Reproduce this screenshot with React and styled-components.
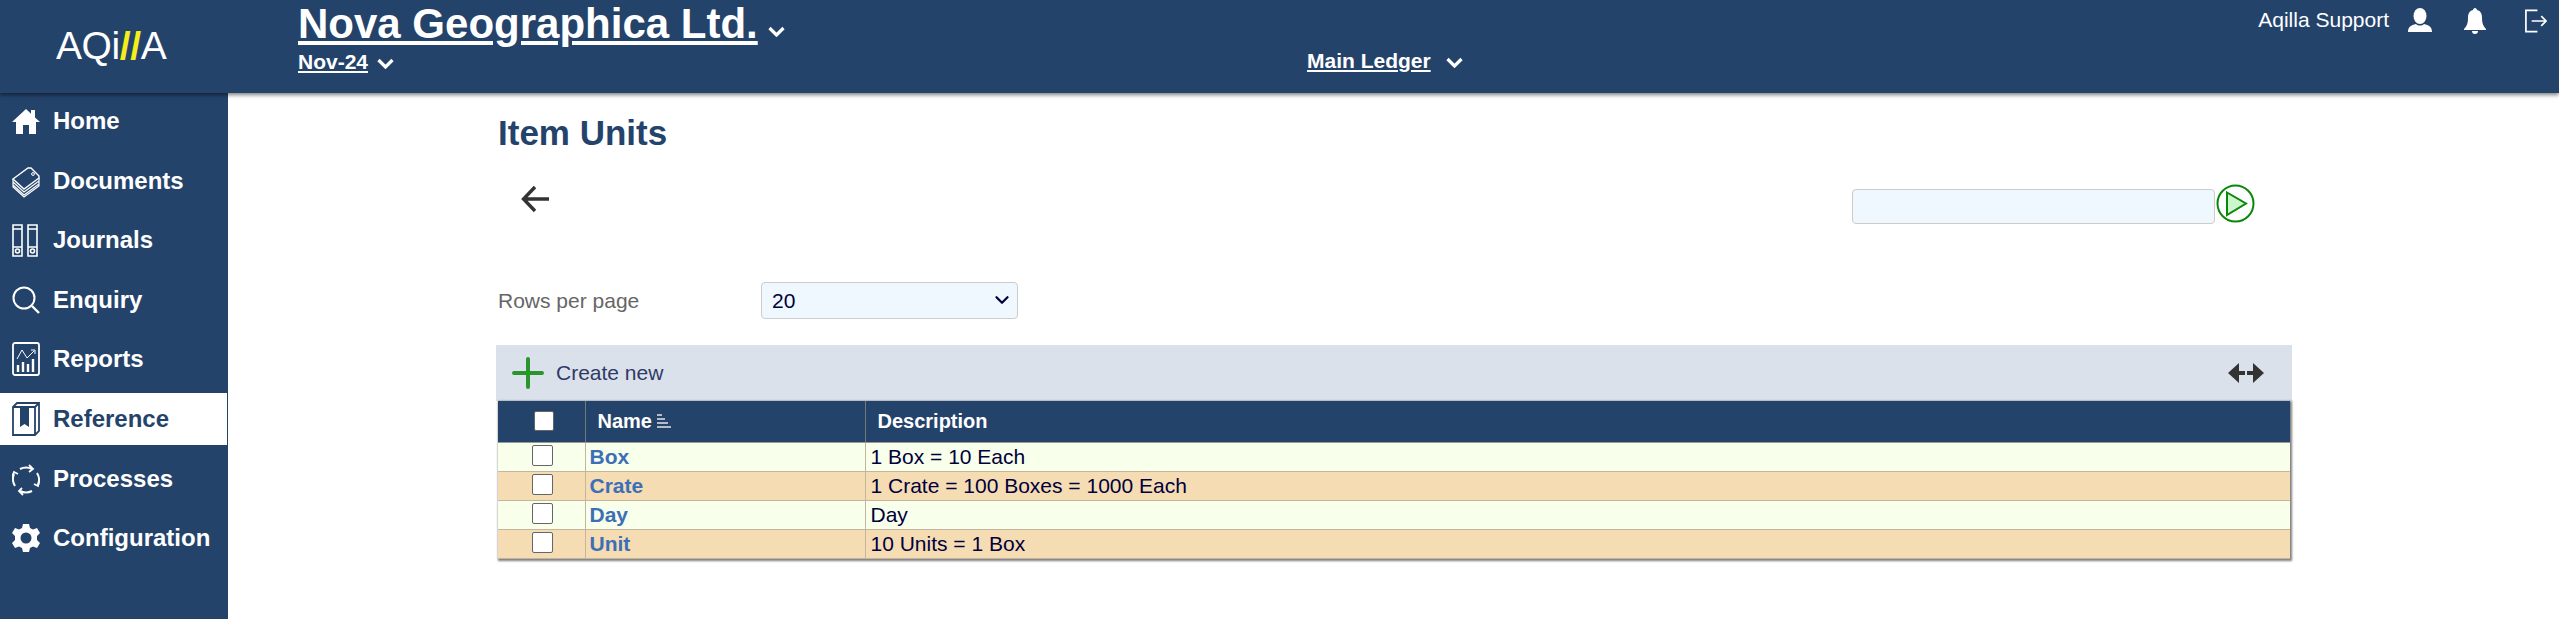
import styled, { createGlobalStyle } from "styled-components"
import { ChevronDown } from "lucide-react"

const navy = "#24436b"

const GlobalStyle = createGlobalStyle`
    html, body {
        margin: 0;
        padding: 0;
        background: white;
        font-family: "Liberation Sans", Arial, sans-serif;
    }
`

const Page = styled.div`
    width: 2559px;
    height: 619px;
    overflow: hidden;
    display: flex;
    flex-direction: column;
`

const Header = styled.header`
    height: 93px;
    flex: none;
    display: flex;
    background: ${navy};
    color: white;
    box-shadow: 0 2px 4px rgba(0, 0, 0, 0.5);
    position: relative;
    z-index: 1;
`

const LogoBox = styled.div`
    width: 228px;
    flex: none;
    padding: 24px 0 0 56px;
    box-sizing: border-box;
    font-size: 39px;
    line-height: 44px;
    letter-spacing: -0.4px;
`

const Slash = styled.span`
    color: #f4ee1a;
    font-weight: 700;
`

const Company = styled.div`
    width: 1070px;
    flex: none;
    padding-left: 70px;
    box-sizing: border-box;
`

const CompanyLine = styled.div`
    display: flex;
    align-items: center;
    height: 48px;
`

const CompanyName = styled.span`
    font-size: 42px;
    line-height: 48px;
    font-weight: 700;
    text-decoration: underline;
`

const PeriodLine = styled.div`
    display: flex;
    align-items: center;
    height: 28px;
`

const SmallLink = styled.span`
    font-size: 21px;
    font-weight: 700;
    text-decoration: underline;
`

const LedgerBox = styled.div`
    width: 400px;
    flex: none;
    padding: 49px 0 0 9px;
    box-sizing: border-box;
    display: flex;
    align-items: flex-start;
`

const Chevron = styled.svg`
    flex: none;
    fill: none;
    stroke: white;
    stroke-width: 3.2;
    margin: ${props => props.$top}px 0 0 ${props => props.$left}px;
`

const UserBox = styled.div`
    margin-left: auto;
    display: flex;
    align-items: flex-start;
    padding: 7px 12px 0 0;
    font-size: 21px;
    line-height: 26px;
`

const UserIcon = styled.svg`
    display: block;
    margin: 1px 0 0 ${props => props.$gap}px;
    fill: white;
`

const Body = styled.div`
    flex: 1;
    display: flex;
    min-height: 0;
`

const Sidebar = styled.nav`
    width: 228px;
    flex: none;
    background: ${navy};
    padding-top: 2px;
    box-sizing: border-box;
`

const NavItem = styled.div`
    height: 52px;
    margin-bottom: 7.6px;
    width: 227px;
    display: flex;
    align-items: center;
    gap: 13px;
    padding-left: 12px;
    box-sizing: border-box;
    font-size: 24px;
    font-weight: 700;
    color: ${props => props.$active ? navy : "white"};
    background: ${props => props.$active ? "white" : "transparent"};
`

const NavIcon = styled.svg`
    width: 28px;
    height: 34px;
    flex: none;
    fill: none;
    stroke: currentColor;
    stroke-width: 1.6;
`

const Main = styled.main`
    flex: 1;
    padding: 22px 0 0 268px;
    box-sizing: border-box;
`

const Content = styled.div`
    width: 1796px;
`

const Title = styled.h1`
    margin: 0 0 21px 2px;
    font-size: 35px;
    line-height: 36px;
    font-weight: 700;
    color: ${navy};
`

const ActionRow = styled.div`
    height: 105px;
    display: flex;
    align-items: flex-start;
    justify-content: space-between;
    padding: 13px 37px 0 25px;
    box-sizing: border-box;
`

const SearchBox = styled.div`
    display: flex;
    align-items: flex-start;
    gap: 1px;
    margin-top: -1px;
`

const SearchInput = styled.input`
    width: 363px;
    height: 35px;
    margin: 5px 0 0;
    box-sizing: border-box;
    background: aliceblue;
    border: 1px solid #ccc;
    border-radius: 4px;
`

const RowsLine = styled.div`
    display: flex;
    align-items: center;
    height: 37px;
    margin-top: 5px;
`

const RowsLabel = styled.label`
    width: 265px;
    padding-left: 2px;
    box-sizing: border-box;
    font-size: 21px;
    color: #666;
`

const SelectBox = styled.div`
    position: relative;
    width: 257px;
    height: 37px;
    color: #00003c;
`

const RowsSelect = styled.select`
    appearance: none;
    width: 100%;
    height: 100%;
    box-sizing: border-box;
    padding-left: 10px;
    background: aliceblue;
    border: 1px solid #ccc;
    border-radius: 4px;
    font-family: inherit;
    font-size: 21px;
    color: inherit;
`

const SelectArrow = styled.span`
    position: absolute;
    top: 7px;
    right: 5px;
    pointer-events: none;
`

const Toolbar = styled.div`
    margin-top: 26px;
    height: 56px;
    display: flex;
    align-items: center;
    justify-content: space-between;
    padding: 0 28px 0 16px;
    background: #dbe1eb;
`

const CreateNew = styled.div`
    display: flex;
    align-items: center;
    gap: 12px;
    font-size: 21px;
    color: #2f3a66;
`

const TableWrap = styled.div`
    margin: 0 2px;
    box-shadow: 1px 1px 2px 1px rgba(0, 0, 0, 0.5);
`

const Table = styled.table`
    width: 100%;
    border-collapse: collapse;
    table-layout: fixed;
    font-size: 21px;
    color: #00003c;
`

const HeadCell = styled.th`
    height: 41px;
    padding: 0 0 0 ${props => props.$pad || 0}px;
    box-sizing: border-box;
    background: ${navy};
    color: white;
    font-size: 20px;
    font-weight: 700;
    text-align: left;
    border-right: 1px solid #777;
    border-bottom: 1px solid #999;
    width: ${props => props.$width || "auto"};

    &:last-child {
        border-right: 0;
    }
`

const Row = styled.tr`
    background: ${props => props.$odd ? "#f5dcb3" : "#f8ffea"};
`

const Cell = styled.td`
    height: 29px;
    padding: 0 0 0 ${props => props.$pad || 5}px;
    box-sizing: border-box;
    border-right: 1px solid #c3b59e;
    border-bottom: 1px solid #c3b59e;
    line-height: 26px;

    &:last-child {
        border-right: 0;
    }
`

const CheckCell = styled(Cell)`
    padding: 0;
    text-align: center;
`

const NameLink = styled.a`
    color: #3d6fb8;
    font-weight: 700;
`

const Check = styled.span`
    display: block;
    width: ${props => props.$head ? 20 : 21}px;
    height: ${props => props.$head ? 20 : 21}px;
    box-sizing: border-box;
    background: white;
    border: 1px solid #666;
    border-radius: 2px;
    margin: ${props => props.$head ? "0 0 0 36px" : "0 0 3px 34px"};
`

const SortBars = styled.svg`
    margin-left: 5px;
    vertical-align: -1px;
`

const HeaderChevron = ({ top, left }) => (
    <Chevron $top={top} $left={left} width="17" height="11" viewBox="0 0 17 11">
        <path d="M1.500 2 8.500 9 15.500 2" />
    </Chevron>
)

const Home = () => (
    <NavIcon viewBox="0 0 28 34">
        <path d="M14 5 0 18h4v12h7v-9h6v9h7V18h4l-5-4.6V6h-4v3.8z" fill="currentColor" stroke="none" />
    </NavIcon>
)

const Documents = () => (
    <NavIcon viewBox="0 0 28 34">
        <path d="M1 15 16 4h3l8 8v2L12 25z" strokeWidth="1.4" />
        <circle cx="21" cy="10" r="1.400" strokeWidth="1" />
        <path d="M1 15v3l11 10 15-11v-3M1 18v3l11 10 15-11v-3M1 21v2l11 10 15-11v-2" strokeWidth="1.200" />
    </NavIcon>
)

const Journals = () => (
    <NavIcon viewBox="0 0 28 34">
        <path d="M1 2h9v31H1zM16 2h9v31h-9zM1 6h9M16 6h9M1 24h9M16 24h9" />
        <circle cx="5.5" cy="28" r="2" />
        <circle cx="20.5" cy="28" r="2" />
    </NavIcon>
)

const Enquiry = () => (
    <NavIcon viewBox="0 0 28 34">
        <circle cx="12" cy="15" r="10.5" strokeWidth="2" />
        <path d="m20 23 7 7" strokeWidth="2.4" />
    </NavIcon>
)

const Reports = () => (
    <NavIcon viewBox="0 0 28 34">
        <rect x="1" y="1" width="26" height="32" rx="2" strokeWidth="1.8" />
        <path d="m5 17 5-9 5 8 7-7M19 8h4v4" strokeWidth="1" />
        <path d="M6 30v-7M11 30V20M16 30v-8M21 30V17" strokeWidth="2.4" />
    </NavIcon>
)

const Reference = () => (
    <NavIcon viewBox="0 0 28 34">
        <path d="M1 5 5 1h22v28l-4 4H1zM1 5h22v28M23 5l4-4" strokeWidth="1.8" />
        <path d="M8 5h9v20l-4.500-3L8 25z" fill="currentColor" stroke="none" />
    </NavIcon>
)

const Processes = () => (
    <NavIcon viewBox="0 0 28 34">
        <path d="M8 7a13 13 0 0 1 12 0M25 11a13 13 0 0 1 1 12M20 29a13 13 0 0 1-12 0M3 24a13 13 0 0 1-1-12" strokeWidth="2" />
        <path d="m17 3 4 4-4 3M27 19l-1 5-4-2M11 33l-4-4 3-3M0 15l2-5 4 2" strokeWidth="1.8" />
    </NavIcon>
)

const Configuration = () => (
    <NavIcon viewBox="0 0 28 34">
        <path d="M11 3h6l1 4 3 1.500 4-1.500 3 5-3 3v4l3 3-3 5-4-1.500-3 1.500-1 4h-6l-1-4-3-1.500-4 1.500-3-5 3-3v-4l-3-3 3-5 4 1.500L10 7z" fill="currentColor" stroke="none" />
        <circle cx="14" cy="17" r="5.500" fill="#24436b" stroke="none" />
    </NavIcon>
)

const navItems = [
    ["Home", Home],
    ["Documents", Documents],
    ["Journals", Journals],
    ["Enquiry", Enquiry],
    ["Reports", Reports],
    ["Reference", Reference],
    ["Processes", Processes],
    ["Configuration", Configuration],
]

const rows = [
    ["Box", "1 Box = 10 Each"],
    ["Crate", "1 Crate = 100 Boxes = 1000 Each"],
    ["Day", "Day"],
    ["Unit", "10 Units = 1 Box"],
]

const App = () => {
    return (
        <Page>
            <GlobalStyle />
            <Header>
                <LogoBox>AQi<Slash>//</Slash>A</LogoBox>
                <Company>
                    <CompanyLine>
                        <CompanyName>Nova Geographica Ltd.</CompanyName>
                        <HeaderChevron top={14} left={10} />
                    </CompanyLine>
                    <PeriodLine>
                        <SmallLink>Nov-24</SmallLink>
                        <HeaderChevron top={3} left={9} />
                    </PeriodLine>
                </Company>
                <LedgerBox>
                    <SmallLink>Main Ledger</SmallLink>
                    <HeaderChevron top={8} left={15} />
                </LedgerBox>
                <UserBox>
                    Aqilla Support
                    <UserIcon $gap={19} width="24" height="24" viewBox="0 0 24 24">
                        <ellipse cx="12" cy="8" rx="6.500" ry="8" />
                        <path d="M0 24c0-5 3-7 8-8 2 2 6 2 8 0 5 1 8 3 8 8z" />
                    </UserIcon>
                    <UserIcon $gap={31} width="24" height="26" viewBox="0 0 24 26">
                        <path d="M12 0c1 0 2 1 2 2 4 1 5 4 5 8 0 5 1 8 4 11v1H1v-1c3-3 4-6 4-11 0-4 1-7 5-8 0-1 1-2 2-2zM9 23h6c0 2-1 3-3 3s-3-1-3-3z" />
                    </UserIcon>
                    <UserIcon $gap={37} width="23" height="26" viewBox="0 0 24 26">
                        <path d="M14 2H2v22h12M8 13h15M18 8l5 5-5 5" fill="none" stroke="white" strokeWidth="1.8" />
                    </UserIcon>
                </UserBox>
            </Header>
            <Body>
                <Sidebar>
                    {navItems.map(([label, Icon]) => (
                        <NavItem key={label} $active={label === "Reference"}>
                            <Icon />
                            {label}
                        </NavItem>
                    ))}
                </Sidebar>
                <Main>
                    <Content>
                        <Title>Item Units</Title>
                        <ActionRow>
                            <svg width="28" height="28" viewBox="0 0 28 28" fill="none" stroke="#333" strokeWidth="3.4">
                                <path d="M28 14H3M14 2 2.500 14 14 26" />
                            </svg>
                            <SearchBox>
                                <SearchInput />
                                <svg width="39" height="39" viewBox="0 0 39 39">
                                    <circle cx="19.500" cy="19.500" r="18" fill="white" stroke="#0a860a" strokeWidth="2" />
                                    <path d="M11 8.500 30 19.500 11 31z" fill="#ccf7cc" stroke="#0a860a" strokeWidth="2" />
                                </svg>
                            </SearchBox>
                        </ActionRow>
                        <RowsLine>
                            <RowsLabel>Rows per page</RowsLabel>
                            <SelectBox>
                                <RowsSelect defaultValue="20">
                                    <option>10</option>
                                    <option>20</option>
                                    <option>50</option>
                                </RowsSelect>
                                <SelectArrow><ChevronDown size={22} strokeWidth={2.5} /></SelectArrow>
                            </SelectBox>
                        </RowsLine>
                        <Toolbar>
                            <CreateNew>
                                <svg width="32" height="32" viewBox="0 0 32 32" stroke="#2a952a" strokeWidth="4" strokeLinecap="round">
                                    <path d="M16 2v28M2 16h28" />
                                </svg>
                                Create new
                            </CreateNew>
                            <svg width="36" height="20" viewBox="0 0 36 20" fill="#333">
                                <path d="M0 10 11 0v8h6v4h-6v8zM36 10 25 0v8h-6v4h6v8z" />
                            </svg>
                        </Toolbar>
                        <TableWrap>
                            <Table>
                                <thead>
                                    <tr>
                                        <HeadCell $width="87px"><Check $head /></HeadCell>
                                        <HeadCell $width="280px" $pad={12}>
                                            Name
                                            <SortBars width="14" height="15" viewBox="0 0 14 15" fill="#b5bcc6">
                                                <path d="M0 0h5v2H0zM0 4h8v2H0zM0 8h11v2H0zM0 12h14v2H0z" />
                                            </SortBars>
                                        </HeadCell>
                                        <HeadCell $pad={12}>Description</HeadCell>
                                    </tr>
                                </thead>
                                <tbody>
                                    {rows.map(([name, description], index) => (
                                        <Row key={name} $odd={index % 2 === 1}>
                                            <CheckCell><Check /></CheckCell>
                                            <Cell $pad={4}><NameLink>{name}</NameLink></Cell>
                                            <Cell>{description}</Cell>
                                        </Row>
                                    ))}
                                </tbody>
                            </Table>
                        </TableWrap>
                    </Content>
                </Main>
            </Body>
        </Page>
    )
}

export default App
